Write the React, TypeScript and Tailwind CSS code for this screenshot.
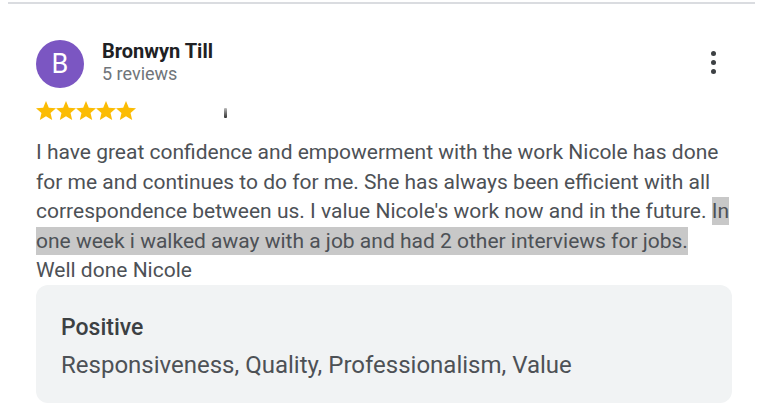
import React from 'react';

const Star = () => (
    <svg width="20" height="19" viewBox="2 2 20 19" className="block">
        <path d="M12 17.27 18.18 21l-1.64-7.03L22 9.24l-7.19-.61L12 2 9.19 8.63 2 9.24l5.46 4.73L5.82 21z" fill="#fbbc04" />
    </svg>
);

export default function App() {
    return (
        <div className="w-[778px] h-[409px] bg-white overflow-hidden" style={{ fontFamily: 'Roboto, "Liberation Sans", sans-serif' }}>
            {/* Divider above the review */}
            <div className="ml-[8px] w-[747px] h-[2px] mt-[2px] bg-[#dadce0]" />

            <div className="px-[36px]">
                {/* Reviewer header */}
                <div className="flex items-start mt-[36px]">
                    <div className="w-[48px] h-[48px] rounded-full bg-[#7b56c2] flex items-center justify-center text-white text-[27px] leading-none">
                        B
                    </div>
                    <div className="ml-[18px] flex flex-col -mt-[1px]">
                        <span className="text-[20px] font-bold text-[#202124] leading-[24px]">Bronwyn Till</span>
                        <span className="text-[18px] text-[#70757a] leading-[22px]">5 reviews</span>
                    </div>
                    <div className="ml-auto mr-[26px] mt-[11px] flex flex-col gap-[4px] items-center">
                        <span className="w-[5px] h-[5px] rounded-full bg-[#3c4043]" />
                        <span className="w-[5px] h-[5px] rounded-full bg-[#3c4043]" />
                        <span className="w-[5px] h-[5px] rounded-full bg-[#3c4043]" />
                    </div>
                </div>

                {/* Rating */}
                <div className="flex items-center mt-[12px] h-[20px]">
                    <div className="flex">
                        <Star />
                        <Star />
                        <Star />
                        <Star />
                        <Star />
                    </div>
                    <span className="ml-[88px] mt-[6px] w-[3px] h-[10px] rounded-[1px] bg-gradient-to-b from-[#bbbbbb] to-[#333333]" />
                </div>

                {/* Review body */}
                <p className="mt-[18px] text-[21px] leading-[29.5px] text-[#4d5156]">
                    I have great confidence and empowerment with the work Nicole has done for me and continues to do for me. She has always been efficient with all correspondence between us. I value Nicole's work now and in the future.{' '}
                    <span className="bg-[#c8c8c8] py-[2px]">In</span>{' '}
                    <span className="bg-[#c8c8c8] py-[2px]">one week i walked away with a job and had 2 other interviews for jobs.</span>
                    <br />
                    Well done Nicole
                </p>

                {/* Highlights box */}
                <div className="-mt-[1px] w-[696px] h-[118px] rounded-[12px] bg-[#f1f3f4] px-[25px] pt-[29px]">
                    <div className="text-[23px] font-medium text-[#3c4043] leading-[28px]">Positive</div>
                    <div className="mt-[8px] text-[24px] text-[#4d5156] leading-[30px]">Responsiveness, Quality, Professionalism, Value</div>
                </div>
            </div>
        </div>
    );
}
